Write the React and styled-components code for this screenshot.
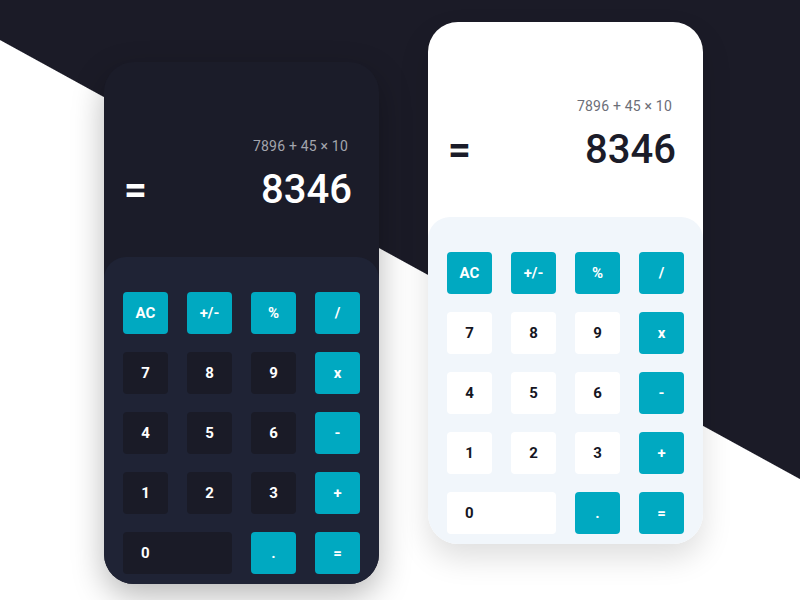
import React from "react";
import styled, { createGlobalStyle } from "styled-components";

const GlobalStyle = createGlobalStyle`
  html, body { margin: 0; padding: 0; }
  body { font-family: Roboto, "Liberation Sans", sans-serif; }
`;

const Page = styled.div`
  width: 800px;
  height: 600px;
  overflow: hidden;
  box-sizing: border-box;
  display: flex;
  align-items: flex-start;
  gap: 49px;
  padding: 22px 0 0 104px;
  background: linear-gradient(208.76deg, #1b1b27 419.5px, #ffffff 420.5px);
`;

const themes = {
  dark: {
    card: "#1b1c29",
    panel: "#1f2335",
    key: "#1a1b27",
    keyText: "#ffffff",
    expr: "#a3a5ad",
    result: "#ffffff",
    shadow: "0 12px 32px rgba(0,0,0,0.28)",
  },
  light: {
    card: "#ffffff",
    panel: "#f1f6fb",
    key: "#ffffff",
    keyText: "#15161f",
    expr: "#6c6e77",
    result: "#1b1c29",
    shadow: "0 14px 30px rgba(0,0,0,0.13)",
  },
};

const Card = styled.div`
  width: 275px;
  height: 522px;
  margin-top: ${(p) => p.$offset}px;
  border-radius: 30px;
  overflow: hidden;
  display: flex;
  flex-direction: column;
  background: ${(p) => themes[p.$mode].card};
  box-shadow: ${(p) => themes[p.$mode].shadow};
`;

const Display = styled.div`
  height: 195px;
  box-sizing: border-box;
  padding: 76px 27px 0 20px;
  display: flex;
  flex-direction: column;
`;

const Expression = styled.div`
  font-size: 14px;
  line-height: 16px;
  letter-spacing: 0.2px;
  text-align: right;
  padding-right: 4px;
  color: ${(p) => themes[p.$mode].expr};
`;

const ResultRow = styled.div`
  margin-top: 12px;
  display: flex;
  justify-content: space-between;
  align-items: center;
  height: 48px;
  color: ${(p) => themes[p.$mode].result};
`;

const Equals = styled.span`
  font-size: 40px;
  line-height: 48px;
  font-weight: 700;
`;

const Result = styled.span`
  font-size: 40px;
  line-height: 48px;
  font-weight: 500;
`;

const Keypad = styled.div`
  flex: 1;
  box-sizing: border-box;
  border-radius: 22px 22px 0 0;
  padding: 35px 19px 10px;
  display: grid;
  grid-template-columns: repeat(4, 45px);
  grid-auto-rows: 42px;
  column-gap: 19px;
  row-gap: 18px;
  background: ${(p) => themes[p.$mode].panel};
`;

const Key = styled.div`
  border-radius: 4px;
  display: flex;
  align-items: center;
  justify-content: ${(p) => (p.$wide ? "flex-start" : "center")};
  padding-left: ${(p) => (p.$wide ? "18px" : "0")};
  grid-column: ${(p) => (p.$wide ? "span 2" : "auto")};
  font-size: 15px;
  font-weight: 700;
  background: ${(p) => (p.$accent ? "#00a9c1" : themes[p.$mode].key)};
  color: ${(p) => (p.$accent ? "#ffffff" : themes[p.$mode].keyText)};
`;

const keys = [
  { l: "AC", a: true },
  { l: "+/-", a: true },
  { l: "%", a: true },
  { l: "/", a: true },
  { l: "7" },
  { l: "8" },
  { l: "9" },
  { l: "x", a: true },
  { l: "4" },
  { l: "5" },
  { l: "6" },
  { l: "-", a: true },
  { l: "1" },
  { l: "2" },
  { l: "3" },
  { l: "+", a: true },
  { l: "0", w: true },
  { l: ".", a: true },
  { l: "=", a: true },
];

function Calculator({ mode, offset }) {
  return (
    <Card $mode={mode} $offset={offset}>
      <Display>
        <Expression $mode={mode}>7896 + 45 × 10</Expression>
        <ResultRow $mode={mode}>
          <Equals>=</Equals>
          <Result>8346</Result>
        </ResultRow>
      </Display>
      <Keypad $mode={mode}>
        {keys.map((k) => (
          <Key key={k.l} $mode={mode} $accent={k.a} $wide={k.w}>
            {k.l}
          </Key>
        ))}
      </Keypad>
    </Card>
  );
}

export default function App() {
  return (
    <>
      <GlobalStyle />
      <Page>
        <Calculator mode="dark" offset={40} />
        <Calculator mode="light" offset={0} />
      </Page>
    </>
  );
}
